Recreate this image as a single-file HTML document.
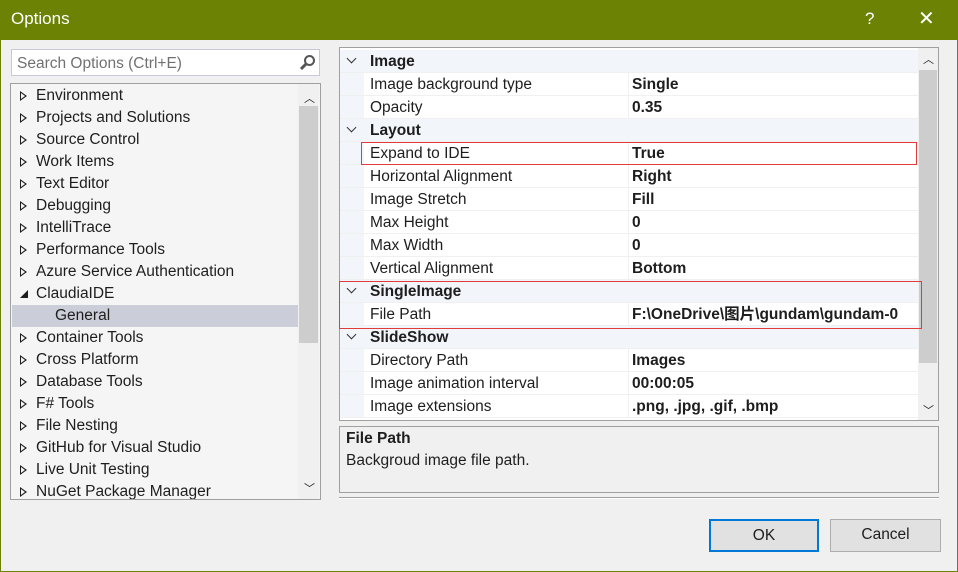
<!DOCTYPE html>
<html><head><meta charset="utf-8"><style>
*{box-sizing:border-box;margin:0;padding:0}
body{width:958px;height:572px;background:#6b8204;font-family:"Liberation Sans","Noto Sans CJK SC",sans-serif;font-size:15.5px;color:#1e1e1e;position:relative;overflow:hidden}
.abs{position:absolute}
#body{left:1px;top:40px;width:956px;height:531px;background:#f0f0f0}
.title{left:11px;top:9px;color:#fff;font-size:17px}
.tb{color:#fff;font-size:17px;top:9px}
.search{left:11px;top:49px;width:309px;height:27px;background:#fff;border:1px solid #c8c8d8;color:#717171;padding:5px 5px}
.tree{left:10px;top:83px;width:311px;height:417px;background:#f5f5f5;border:1px solid #a0a0a0;overflow:hidden}
.ti{position:absolute;left:25px;white-space:nowrap;line-height:20px}
.tri{position:absolute;left:9px;width:0;height:0;border-top:5px solid transparent;border-bottom:5px solid transparent;border-left:7px solid #1e1e1e}
.tri:after{content:"";position:absolute;left:-6px;top:-3px;border-top:3px solid transparent;border-bottom:3px solid transparent;border-left:4px solid #f5f5f5}
.sb{background:#f0f0f0}
.thumb{background:#cdcdcd}
.grid{left:339px;top:47px;width:600px;height:374px;background:#fff;border:1px solid #a0a0a0;overflow:hidden}
.row{position:absolute;left:0;width:578px;height:23px;border-bottom:1px solid #f0f0f0}
.cat{background:#f2f5fa;font-weight:bold}
.nm{position:absolute;left:30px;top:3px;white-space:nowrap;line-height:18px}
.vl{position:absolute;left:292px;top:3px;font-weight:bold;white-space:nowrap;line-height:18px;height:20px}
.gut{position:absolute;left:0;top:0;width:24px;height:100%;background:#f2f5fa}
.vsep{position:absolute;left:288px;top:0;width:1px;height:100%;background:#f0f0f0}
.chev{position:absolute;left:8px;top:5px;width:7px;height:7px;border-right:1.5px solid #333;border-bottom:1.5px solid #333;transform:rotate(45deg)}
.desc{left:339px;top:426px;width:600px;height:67px;border:1px solid #a0a0a0;padding:3px 6px}
.btn{top:519px;height:33px;background:#e1e1e1;border:1px solid #adadad;text-align:center;line-height:30px}
.red{z-index:5;border:1px solid #e03c3c}
</style></head><body>
<div class="abs title">Options</div>
<div class="abs tb" style="left:865px">?</div>
<div class="abs tb" style="left:918px;font-size:20px;top:6px">✕</div>
<div id="body" class="abs"></div>
<div class="abs search">Search Options (Ctrl+E)
<svg style="position:absolute;right:3px;top:4px" width="17" height="17" viewBox="0 0 17 17"><circle cx="10.5" cy="6.5" r="4.5" fill="none" stroke="#555" stroke-width="2"/><path d="M7.5 9.5L2 15" stroke="#555" stroke-width="3"/></svg></div>
<div class="abs tree">
<div class="abs" style="left:1px;top:221px;width:287px;height:22px;background:#cbcdd9"></div>
<div id="tl"></div>
<div class="abs sb" style="left:287px;top:0;width:21px;height:415px"></div>
<div class="abs thumb" style="left:288px;top:22px;width:19px;height:237px"></div>
<div class="abs" style="left:293px;top:6px;font-size:11px">︿</div>
<div class="abs" style="left:293px;top:396px;font-size:11px">﹀</div>
</div>
<div class="abs grid">
<div id="gl"></div>
<div class="abs sb" style="left:578px;top:0;width:20px;height:372px"></div>
<div class="abs thumb" style="left:579px;top:22px;width:18px;height:293px"></div>
<div class="abs" style="left:583px;top:3px;font-size:11px">︿</div>
<div class="abs" style="left:583px;top:354px;font-size:11px">﹀</div>
</div>
<div class="abs red" style="left:361px;top:142px;width:556px;height:23px"></div>
<div class="abs red" style="left:339px;top:281px;width:583px;height:48px"></div>
<div class="abs desc"><b>File Path</b><div style="margin-top:4px">Backgroud image file path.</div></div>
<div class="abs" style="left:339px;top:497px;width:600px;height:1px;background:#a0a0a0"></div>
<div class="abs" style="left:339px;top:498px;width:600px;height:1px;background:#fff"></div>
<div class="abs btn" style="left:709px;width:110px;border:2px solid #0078d7">OK</div>
<div class="abs btn" style="left:830px;width:111px">Cancel</div>
<script>
var items=["Environment","Projects and Solutions","Source Control","Work Items","Text Editor","Debugging","IntelliTrace","Performance Tools","Azure Service Authentication","ClaudiaIDE","General","Container Tools","Cross Platform","Database Tools","F# Tools","File Nesting","GitHub for Visual Studio","Live Unit Testing","NuGet Package Manager"];
var h="";items.forEach(function(t,i){var y=2+i*22;
if(t=="General")h+='<div class="ti" style="left:44px;top:'+y+'px">'+t+'</div>';
else if(t=="ClaudiaIDE")h+='<div class="abs" style="left:9px;top:'+(y+6)+'px;width:0;height:0;border-left:8px solid transparent;border-bottom:8px solid #1e1e1e"></div><div class="ti" style="top:'+y+'px">'+t+'</div>';
else h+='<div class="tri" style="top:'+(y+5)+'px"></div><div class="ti" style="top:'+y+'px">'+t+'</div>';});
document.getElementById("tl").innerHTML=h;
var rows=[["c","Image"],["Image background type","Single"],["Opacity","0.35"],["c","Layout"],["Expand to IDE","True"],["Horizontal Alignment","Right"],["Image Stretch","Fill"],["Max Height","0"],["Max Width","0"],["Vertical Alignment","Bottom"],["c","SingleImage"],["File Path","F:\\OneDrive\\图片\\gundam\\gundam-0"],["c","SlideShow"],["Directory Path","Images"],["Image animation interval","00:00:05"],["Image extensions",".png, .jpg, .gif, .bmp"]];
h="";rows.forEach(function(r,i){var y=2+i*23;
if(r[0]=="c")h+='<div class="row cat" style="top:'+y+'px"><div class="chev"></div><div class="nm">'+r[1]+'</div></div>';
else h+='<div class="row" style="top:'+y+'px"><div class="gut"></div><div class="vsep"></div><div class="nm">'+r[0]+'</div><div class="vl">'+r[1]+'</div></div>';});
document.getElementById("gl").innerHTML=h;
</script>
</body></html>
